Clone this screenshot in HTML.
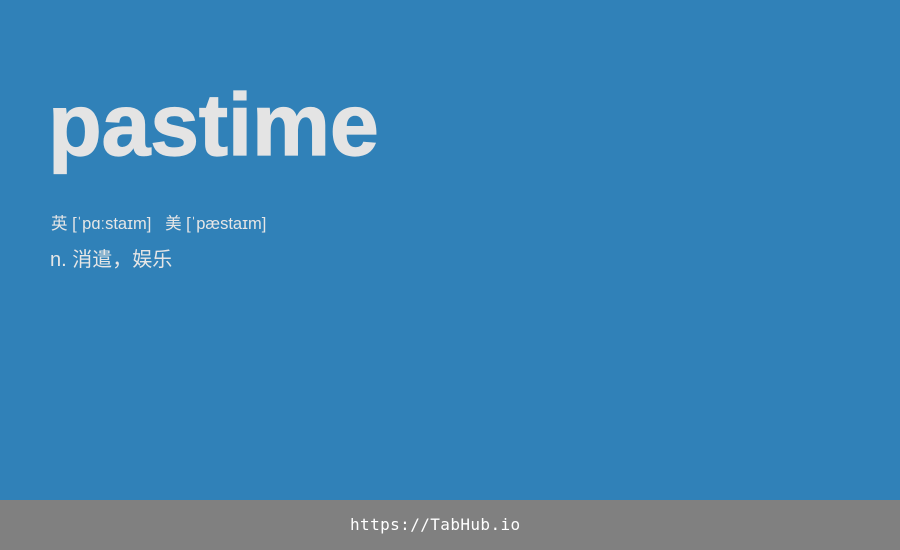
<!DOCTYPE html>
<html><head><meta charset="utf-8"><style>
html,body{margin:0;padding:0}
body{width:900px;height:550px;background:#3081b8;position:relative;overflow:hidden;font-family:"Liberation Sans","Noto Sans CJK SC",sans-serif;color:#e6e6e6}
h1{position:absolute;left:48px;top:70px;margin:0;font-size:88px;font-weight:bold;letter-spacing:-0.3px;line-height:110px;color:#e4e4e4;-webkit-text-stroke:1.2px #e4e4e4}
.ph{position:absolute;left:51px;top:214px;font-size:16.5px;line-height:20px}
.def{position:absolute;left:50px;top:248px;font-size:20px;line-height:24px}
.foot{position:absolute;left:0;top:500px;width:900px;height:50px;background:#808080;color:#fff;font-family:"DejaVu Sans Mono","Liberation Mono",monospace;font-size:16px;line-height:50px}
.foot span{position:absolute;left:350px;letter-spacing:0.4px}
</style></head><body>
<h1>pastime</h1>
<div class="ph">英 [ˈpɑːstaɪm]&nbsp;&nbsp;&nbsp;美 [ˈpæstaɪm]</div>
<div class="def">n. 消遣，娱乐</div>
<div class="foot"><span>https://TabHub.io</span></div>
</body></html>
